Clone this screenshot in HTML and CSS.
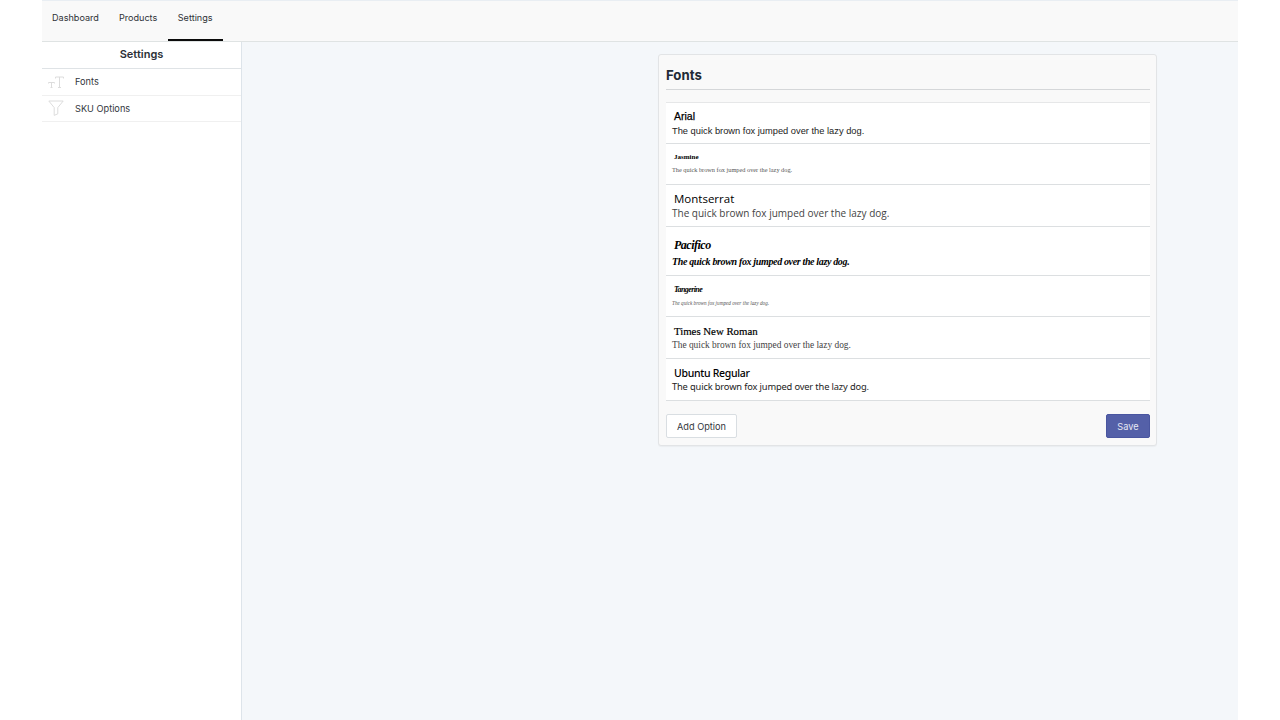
FILE: index.html
```html
<!DOCTYPE html>
<html lang="en">
<head>
  <meta charset="utf-8">
  <meta name="viewport" content="width=device-width, initial-scale=1">
  <title>Settings – Fonts</title>
  <link rel="stylesheet" href="styles.css">
</head>
<body>
  <div class="app">
    <!-- Top nav -->
    <nav class="topnav">
      <a class="tab" href="#">Dashboard</a>
      <a class="tab" href="#">Products</a>
      <a class="tab active" href="#">Settings</a>
    </nav>

    <div class="body-row">
      <!-- Sidebar -->
      <aside class="sidebar">
        <h2 class="sidebar-title">Settings</h2>
        <a class="side-item" href="#">
          <svg class="side-icon" width="16" height="12" viewBox="0 0 16 12" fill="none" stroke="#dcdcdc" stroke-width="1">
            <path d="M0.5 7.5v-1h6v1M3.5 6.5v5M2.5 11.5h2"/>
            <path d="M7.5 2.5v-1.5h8v1.5M11.5 1v10.5M10 11.5h3"/>
          </svg>
          <span>Fonts</span>
        </a>
        <a class="side-item" href="#">
          <svg class="side-icon" width="16" height="16" viewBox="0 0 16 16" fill="none" stroke="#dcdcdc" stroke-width="1">
            <path d="M0.8 1h14.4l-5.4 6.6v6.2l-3.6 1.6v-7.8z"/>
          </svg>
          <span>SKU Options</span>
        </a>
      </aside>

      <!-- Main -->
      <main class="content">
        <section class="card">
          <h1 class="card-title">Fonts</h1>
          <ul class="font-list">
            <li class="font-row row-arial">
              <div class="font-name">Arial</div>
              <div class="font-sample">The quick brown fox jumped over the lazy dog.</div>
            </li>
            <li class="font-row row-jasmine">
              <div class="font-name">Jasmine</div>
              <div class="font-sample">The quick brown fox jumped over the lazy dog.</div>
            </li>
            <li class="font-row row-montserrat">
              <div class="font-name">Montserrat</div>
              <div class="font-sample">The quick brown fox jumped over the lazy dog.</div>
            </li>
            <li class="font-row row-pacifico">
              <div class="font-name">Pacifico</div>
              <div class="font-sample">The quick brown fox jumped over the lazy dog.</div>
            </li>
            <li class="font-row row-tangerine">
              <div class="font-name">Tangerine</div>
              <div class="font-sample">The quick brown fox jumped over the lazy dog.</div>
            </li>
            <li class="font-row row-times">
              <div class="font-name">Times New Roman</div>
              <div class="font-sample">The quick brown fox jumped over the lazy dog.</div>
            </li>
            <li class="font-row row-ubuntu">
              <div class="font-name">Ubuntu Regular</div>
              <div class="font-sample">The quick brown fox jumped over the lazy dog.</div>
            </li>
          </ul>
          <div class="card-actions">
            <button class="btn" type="button">Add Option</button>
            <button class="btn btn-primary" type="button">Save</button>
          </div>
        </section>
      </main>
    </div>
  </div>
</body>
</html>
```

FILE: styles.css
```css
:root {
  --bg-main: #f4f7fa;
  --bg-bar: #f9f9f9;
  --line: #dfe3e6;
  --text: #212b36;
  --indigo: #5460a8;
}
*, *::before, *::after { box-sizing: border-box; }
html, body { height: 100%; }
body { margin: 0; background: #fff; color: var(--text); font-family: "Inter", "Liberation Sans", sans-serif; font-size: 10px; }
a { color: inherit; text-decoration: none; }

.app { width: 1196px; height: 720px; margin-left: 42px; display: flex; flex-direction: column; border-top: 1px solid #e9eef3; }

.topnav { height: 41px; flex: none; display: flex; background: var(--bg-bar); border-bottom: 1px solid #dfe3e3; }
.tab { height: 40px; padding: 0 10px; line-height: 33px; font-size: 9.1px; color: #2f3237; }
.tab.active { width: 55px; margin-left: 1px; padding: 0 9.5px; border-bottom: 2px solid #0b0b0b; }

.body-row { flex: 1; display: flex; min-height: 0; }

.sidebar { width: 200px; flex: none; background: #fff; border-right: 1px solid #dde4ea; }
.sidebar-title { margin: 0; height: 27px; line-height: 25px; text-align: center; font-size: 11px; font-weight: 600; color: #2b2f36; border-bottom: 1px solid #dfe3e6; }
.side-item { display: flex; align-items: center; height: 26.5px; border-bottom: 1px solid #f0f0f0; font-size: 9.2px; color: #33373d; }
.side-item span { margin-left: 11px; line-height: 14px; padding-top: 1px; }
.side-icon { margin-left: 6px; flex: none; }

.content { flex: 1; background: var(--bg-main); padding: 12px 80px 0 416px; }

.card { width: 499px; height: 392px; padding: 0 6px 0 7px; background: var(--bg-bar); border: 1px solid #e2e4e6; border-radius: 3px; box-shadow: 0 1px 1px rgba(0, 0, 0, 0.04); }
.card-title { margin: 0; height: 35px; padding-top: 12px; line-height: 17px; font-size: 13.2px; font-weight: 700; color: #212b36; border-bottom: 1px solid #d5d7d9; }

.font-list { margin: 12px 0 0; padding: 0; list-style: none; background: #fff; border-top: 1px solid #e6e7e8; }
.font-row { display: flex; flex-direction: column; justify-content: center; padding-left: 6px; border-bottom: 1px solid #dcdfe1; color: #000; }
.font-name { margin-left: 2px; }
.font-sample { white-space: nowrap; color: #222; }

.row-arial { height: 41px; padding-top: 1px; font-family: "Liberation Sans", Arial, sans-serif; }
.row-arial .font-name { font-size: 10.5px; line-height: 15px; -webkit-text-stroke: 0.25px #000; }
.row-arial .font-sample { font-size: 9.3px; line-height: 14px; }

.row-jasmine { height: 41px; padding-bottom: 3px; font-family: "Liberation Serif", serif; }
.row-jasmine .font-name { font-size: 7px; line-height: 14px; font-weight: 700; }
.row-jasmine .font-sample { font-size: 6.3px; line-height: 12px; color: #555; }

.row-montserrat { height: 42px; font-family: "Open Sans", sans-serif; }
.row-montserrat .font-name { font-size: 11.5px; line-height: 15px; font-weight: 500; }
.row-montserrat .font-sample { font-size: 10px; line-height: 14px; color: #444; }

.row-pacifico { height: 49px; padding-top: 4px; font-family: "Liberation Serif", serif; font-style: italic; font-weight: 700; }
.row-pacifico .font-name { font-size: 12px; line-height: 18px; letter-spacing: -0.5px; }
.row-pacifico .font-sample { font-size: 10px; line-height: 16px; letter-spacing: -0.35px; color: #000; }

.row-tangerine { height: 41px; padding-bottom: 1px; font-family: "Liberation Serif", serif; font-style: italic; }
.row-tangerine .font-name { font-size: 8px; line-height: 14px; font-weight: 700; letter-spacing: -0.6px; }
.row-tangerine .font-sample { font-size: 5.2px; line-height: 12px; color: #555; }

.row-times { height: 42px; padding-top: 1px; font-family: "Liberation Serif", "Times New Roman", serif; }
.row-times .font-name { font-size: 10.8px; line-height: 14px; -webkit-text-stroke: 0.2px #000; }
.row-times .font-sample { font-size: 9.4px; line-height: 14px; color: #444; }

.row-ubuntu { height: 42px; font-family: "Noto Sans", sans-serif; }
.row-ubuntu .font-name { font-size: 10.5px; line-height: 15px; font-weight: 500; letter-spacing: -0.3px; padding-top: 1px; margin-bottom: -1px; }
.row-ubuntu .font-sample { font-size: 9.3px; line-height: 14px; letter-spacing: -0.15px; }

.card-actions { display: flex; justify-content: space-between; margin-top: 13px; }
.btn { height: 24px; padding: 0 10px; font: inherit; font-size: 9.2px; color: #33373d; background: #fff; border: 1px solid #d9dee2; border-radius: 2px; cursor: pointer; }
.btn-primary { width: 44px; padding: 0; color: #e6e8f4; background: var(--indigo); border-color: #4a56a0; }
```
